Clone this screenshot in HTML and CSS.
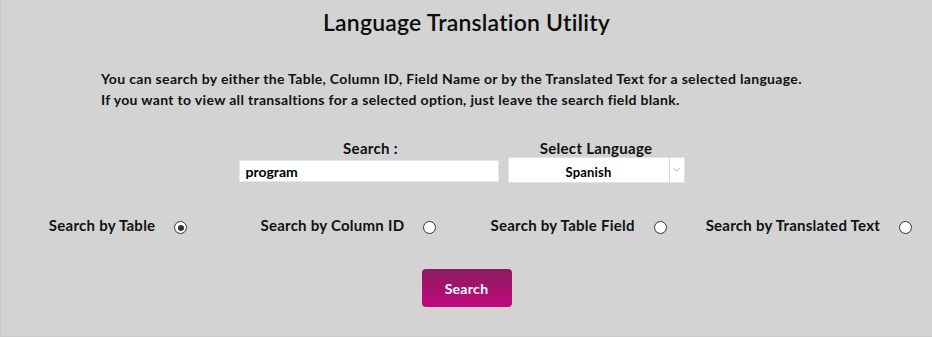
FILE: index.html
```html
<!DOCTYPE html>
<html>
<head>
<meta charset="utf-8">
<title>Language Translation Utility</title>
<link rel="stylesheet" href="styles.css">
</head>
<body>
<div class="page">
  <h1 class="title">Language Translation Utility</h1>
  <div class="intro">
    <p>You can search by either the Table, Column ID, Field Name or by the Translated Text for a selected language.</p>
    <p>If you want to view all transaltions for a selected option, just leave the search field blank.</p>
  </div>
  <div class="fields">
    <div class="field field-search">
      <label class="field-label">Search :</label>
      <input class="search-input" type="text" value="program">
    </div>
    <div class="field field-lang">
      <label class="field-label">Select Language</label>
      <div class="select">
        <span class="select-value">Spanish</span>
        <span class="select-arrow">
          <svg width="7" height="4" viewBox="0 0 7 4"><path d="M0.5 0.5 L3.5 3.2 L6.5 0.5" fill="none" stroke="#a8a8a8" stroke-width="1"/></svg>
        </span>
      </div>
    </div>
  </div>
  <div class="options">
    <div class="option"><span class="option-label">Search by Table</span><span class="radio checked"></span></div>
    <div class="option"><span class="option-label">Search by Column ID</span><span class="radio"></span></div>
    <div class="option"><span class="option-label">Search by Table Field</span><span class="radio"></span></div>
    <div class="option"><span class="option-label">Search by Translated Text</span><span class="radio"></span></div>
  </div>
  <div class="actions">
    <button class="btn" type="button">Search</button>
  </div>
</div>
</body>
</html>
```
FILE: styles.css
```css
html, body {
  margin: 0;
  padding: 0;
}
body {
  background: #d3d3d3;
  font-family: "Lato", "DejaVu Sans", sans-serif;
  color: #111;
}
.page {
  width: 932px;
  height: 337px;
  box-sizing: border-box;
  border: 1px solid #c9c9c9;
  border-top: none;
  border-right: none;
}
.title {
  margin: 0;
  padding-top: 9px;
  text-align: center;
  font-size: 23px;
  font-weight: 600;
  line-height: 26px;
  color: #0d0d0d;
  letter-spacing: 0.2px;
}
.intro {
  margin-top: 33px;
  padding-left: 100px;
}
.intro p {
  margin: 0;
  font-size: 14px;
  font-weight: 700;
  line-height: 21px;
  letter-spacing: 0.33px;
}
.fields {
  display: flex;
  justify-content: center;
  gap: 9px;
  margin-top: 29px;
  padding-right: 10px;
}
.field {
  display: flex;
  flex-direction: column;
  align-items: center;
}
.field-label {
  font-size: 15px;
  font-weight: 700;
  line-height: 18px;
  letter-spacing: 0.3px;
}
.field-search .field-label {
  margin-bottom: 3px;
  padding-left: 4px;
}
.search-input {
  width: 260px;
  height: 22px;
  box-sizing: border-box;
  border: 1px solid #e6e6e6;
  background: #fff;
  padding: 0 6px;
  font-family: "Lato", "DejaVu Sans", sans-serif;
  font-size: 14px;
  font-weight: 700;
  color: #000;
  outline: none;
}
.select {
  display: flex;
  width: 177px;
  height: 26px;
  box-sizing: border-box;
  background: #fff;
  border: 1px solid #e2e2e2;
}
.select-value {
  flex: 1;
  text-align: center;
  font-size: 13px;
  font-weight: 700;
  line-height: 28px;
  color: #000;
  letter-spacing: 0.2px;
}
.select-arrow {
  width: 14px;
  border-left: 1px solid #d8d8d8;
  display: flex;
  align-items: center;
  justify-content: center;
}
.options {
  display: grid;
  grid-template-columns: repeat(4, 1fr);
  margin-top: 33px;
  padding: 0 8px 0 2px;
}
.option {
  display: flex;
  align-items: center;
  justify-content: center;
  gap: 19px;
}
.option-label {
  font-size: 15px;
  font-weight: 700;
  line-height: 18px;
  letter-spacing: 0.25px;
}
.radio {
  width: 11px;
  height: 11px;
  border: 1px solid #333;
  border-radius: 50%;
  background: #fff;
  position: relative;
  margin-top: 5px;
}
.radio.checked::after {
  content: "";
  position: absolute;
  left: 2.5px;
  top: 2.5px;
  width: 6px;
  height: 6px;
  border-radius: 50%;
  background: #333;
}
.actions {
  display: flex;
  justify-content: center;
  margin-top: 35px;
}
.btn {
  width: 90px;
  height: 38px;
  border: none;
  border-radius: 4px;
  background: linear-gradient(to bottom, #8a1c5f, #c2087e);
  color: #fff;
  font-family: "Lato", "DejaVu Sans", sans-serif;
  font-size: 14px;
  font-weight: 700;
  letter-spacing: 0.3px;
}
```
